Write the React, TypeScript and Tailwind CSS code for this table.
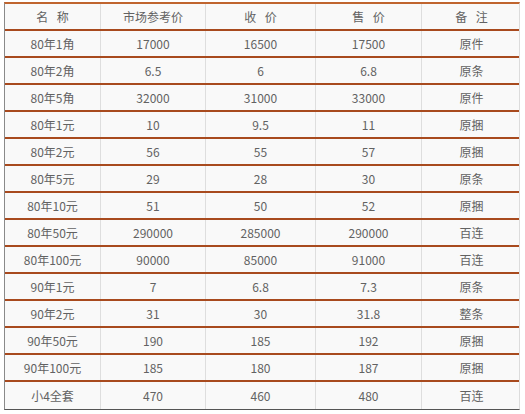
import React from "react";

const rows: string[][] = [
  ["80年1角", "17000", "16500", "17500", "原件"],
  ["80年2角", "6.5", "6", "6.8", "原条"],
  ["80年5角", "32000", "31000", "33000", "原件"],
  ["80年1元", "10", "9.5", "11", "原捆"],
  ["80年2元", "56", "55", "57", "原捆"],
  ["80年5元", "29", "28", "30", "原条"],
  ["80年10元", "51", "50", "52", "原捆"],
  ["80年50元", "290000", "285000", "290000", "百连"],
  ["80年100元", "90000", "85000", "91000", "百连"],
  ["90年1元", "7", "6.8", "7.3", "原条"],
  ["90年2元", "31", "30", "31.8", "整条"],
  ["90年50元", "190", "185", "192", "原捆"],
  ["90年100元", "185", "180", "187", "原捆"],
  ["小4全套", "470", "460", "480", "百连"],
];

const head = ["名 称", "市场参考价", "收 价", "售 价", "备 注"];
const widths = ["w-[96px]", "w-[105px]", "w-[110px]", "w-[106px]", "w-[99px]"];

export default function App() {
  return (
    <div className="w-[525px] h-[414px] bg-white pt-[2px] pl-[4px]" style={{ fontFamily: '"Noto Sans CJK SC", "Noto Sans", sans-serif' }}>
      <div className="w-[516px] border-l border-l-[#8a8a8a] border-b border-b-[#555] border-r border-r-[#dcdcdc] border-t-2 border-t-[#c0652f]">
        {[head, ...rows].map((r, i) => (
          <div
            key={i}
            className={
              "flex h-[27px] bg-[#f9f9f9] " +
              (i < rows.length ? "border-b-2 border-b-[#a84a1e]" : "")
            }
          >
            {r.map((c, j) => (
              <div
                key={j}
                className={
                  widths[j] +
                  " shrink-0 flex items-center justify-center text-[12px] text-[#626262] whitespace-pre [word-spacing:6px] " +
                  (j < 4 ? "border-r border-r-[#dedede]" : "")
                }
              >
                {c}
              </div>
            ))}
          </div>
        ))}
      </div>
    </div>
  );
}
